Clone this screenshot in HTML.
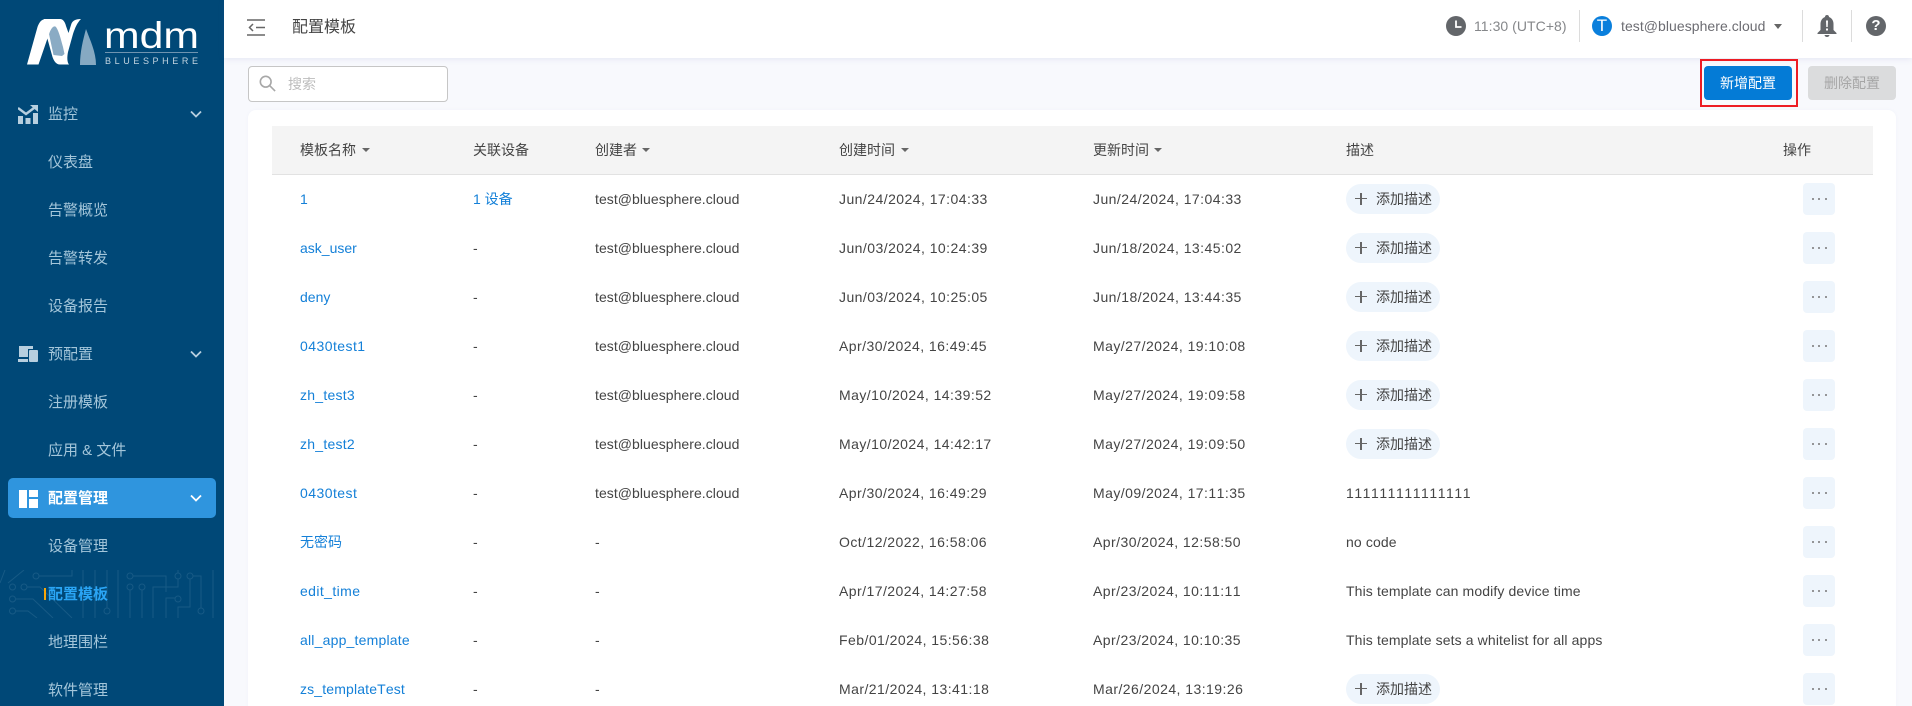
<!DOCTYPE html>
<html lang="zh"><head><meta charset="utf-8"><title>配置模板</title>
<style>
*{box-sizing:border-box;margin:0;padding:0}
html,body{width:1912px;height:706px;overflow:hidden;background:#f8f9fd}
body{position:relative;font-family:"Liberation Sans","Noto Sans CJK SC",sans-serif;font-size:14px;color:#444}
.abs{position:absolute}
#side{position:absolute;left:0;top:0;width:224px;height:706px;background:#004877;overflow:hidden}
.m{position:absolute;left:48px;font-size:15px;line-height:24px;height:24px;color:#a4c6da;white-space:nowrap}
.act{position:absolute;left:8px;top:478px;width:208px;height:40px;background:#2f95de;border-radius:5px}
.chev{position:absolute;left:190px;width:12px;height:8px}
#top{position:absolute;left:224px;top:0;width:1688px;height:58px;background:#fff;box-shadow:0 1px 6px rgba(90,100,170,.13)}
.dv{position:absolute;top:10px;width:1px;height:32px;background:#dcdcdc}
.btn{position:absolute;top:66px;width:88px;height:34px;border-radius:4px;text-align:center;line-height:34px}
#card2{position:absolute;left:248px;top:110px;width:1648px;height:620px;background:#fff;border-radius:8px;box-shadow:0 0 3px rgba(120,130,180,.06)}
#th{position:absolute;left:272px;top:126px;width:1601px;height:49px;background:#f4f4f4;border-bottom:1px solid #e2e2e2}
.h{position:absolute;top:126px;line-height:48px;height:48px;color:#444;white-space:nowrap}
.car{position:absolute;top:148px;width:0;height:0;border-left:4px solid transparent;border-right:4px solid transparent;border-top:4px solid #666}
.c{position:absolute;line-height:50px;height:50px;white-space:nowrap;color:#444;font-kerning:none}
.a{left:300px;color:#1480d8}
.b{left:473px}
.d{left:595px;letter-spacing:.05px}
.e{left:839px;letter-spacing:.45px}
.f{left:1093px;letter-spacing:.45px}
.g{left:1346px;letter-spacing:.12px}
.p{position:absolute;left:1346px;width:94px;height:30px;border-radius:15px;background:#eef5fc;line-height:30px;padding-left:30px;color:#444;white-space:nowrap}
.p:before{content:"";position:absolute;left:9px;top:14px;width:12px;height:1.4px;background:#666}
.p:after{content:"";position:absolute;left:14.3px;top:9px;width:1.4px;height:12px;background:#666}
.o{position:absolute;left:1803px;width:32px;height:32px;border-radius:4px;background:#eef5fc}
.o i{position:absolute;top:15px;width:2px;height:2px;background:#777;border-radius:50%}
.o i:nth-child(1){left:8.5px}.o i:nth-child(2){left:15px}.o i:nth-child(3){left:21.5px}
</style></head><body>

<div id="side">
<svg class="abs" style="left:0;top:0" width="224" height="80" viewBox="0 0 224 80">
<path d="M44 19 H60 C63 19 65 22 66 26 L68.5 33 L71 25 C72 21 75 19 81 19 C77 23 75 28 73 34 L68 52 C67 57 67 62 69 64.5 H60 C56 64.5 54 61 52.5 57 L45 30 Z" fill="#fff"/>
<path d="M49 34 C51 28 54 25 56 27 C59 31 61 40 63 47 L64.5 54 L62 56 L53.5 55 Z" fill="#8aabc4"/>
<path d="M27 64.5 H38.5 L49 34 C51 28 53 25 58 21 L60 19 H46 C41 19 39 23 37.5 27 Z" fill="#fff"/>
<path d="M80 65 C80 52 83 40 86 29 C90 40 96 52 96 65 Z" fill="#86a9c2"/>
<text x="104" y="48" font-family="Liberation Sans" font-size="37" fill="#fff" textLength="95" lengthAdjust="spacingAndGlyphs">mdm</text>
<rect x="105" y="52" width="93" height="1" fill="#6f94b0"/>
<text x="105" y="64" font-family="Liberation Sans" font-size="9" fill="#c2d4e0" textLength="93">BLUESPHERE</text>
</svg>

<svg class="abs" style="left:0;top:570px" width="224" height="48" viewBox="0 0 224 48" fill="none" stroke="#175a85" stroke-width="1">
<path d="M0 13 L5 0 M24 0 L8 13"/>
<circle cx="12.5" cy="17" r="3"/><circle cx="24" cy="17" r="3"/><circle cx="12.5" cy="29" r="3"/><circle cx="12.5" cy="41" r="3"/>
<path d="M27 17 H40 L72 48 M16 29 H33 L53 48 M16 41 H28 L37 48"/>
<circle cx="36" cy="6" r="3"/><path d="M39 6 H72 V0"/>
<path d="M83 0 V48 M95 0 V48"/><circle cx="107" cy="41" r="3"/><path d="M107 38 V0 M118 0 V48"/>
<circle cx="130" cy="6" r="3"/><path d="M133 6 H166 V22"/>
<circle cx="130" cy="17" r="3"/><path d="M130 20 V48"/><circle cx="142" cy="17" r="3"/><path d="M142 20 V48"/>
<path d="M166 48 V28 H175"/><circle cx="178" cy="29" r="3"/>
<circle cx="178" cy="6" r="3"/><circle cx="190" cy="6" r="3"/>
<path d="M178 0 V3 M178 9 V17 H153 V48 M190 9 V37 H178 V48"/>
<path d="M193 6 H201 V38"/><circle cx="201" cy="41" r="3"/><path d="M213 0 V48"/>
</svg>

<svg class="abs" style="left:18px;top:105px" width="20" height="19" viewBox="0 0 20 19" fill="#b7cfdf">
<rect x="0" y="11" width="5" height="8"/><rect x="7.5" y="13" width="5" height="6"/><rect x="15" y="8" width="5" height="11"/>
<path d="M0 3 L8 9 L16 3" fill="none" stroke="#b7cfdf" stroke-width="2.4"/><path d="M12 0 H20 V7 Z"/></svg>
<div class="m" style="top:103px">监控</div>
<svg class="chev" style="top:110px" viewBox="0 0 12 8"><path d="M1 1.5 L6 6.5 L11 1.5" fill="none" stroke="#b7cfdf" stroke-width="1.8"/></svg>
<div class="m" style="top:151px">仪表盘</div>
<div class="m" style="top:199px">告警概览</div>
<div class="m" style="top:247px">告警转发</div>
<div class="m" style="top:295px">设备报告</div>

<svg class="abs" style="left:18px;top:346px" width="20" height="16" viewBox="0 0 20 16" fill="#b7cfdf">
<path d="M1 0 H15 V3 H10 V11 H1 Z"/><rect x="0" y="13" width="10" height="3"/><rect x="11" y="4" width="9" height="12" rx="1"/></svg>
<div class="m" style="top:343px">预配置</div>
<svg class="chev" style="top:350px" viewBox="0 0 12 8"><path d="M1 1.5 L6 6.5 L11 1.5" fill="none" stroke="#b7cfdf" stroke-width="1.8"/></svg>
<div class="m" style="top:391px">注册模板</div>
<div class="m" style="top:439px">应用 &amp; 文件</div>

<div class="act"></div>
<svg class="abs" style="left:19px;top:490px" width="19" height="18" viewBox="0 0 19 18" fill="#fff"><rect width="8" height="18"/><rect x="10" width="9" height="7"/><rect x="10" y="9" width="9" height="9"/></svg>
<div class="m" style="top:487px;color:#fff;font-weight:bold">配置管理</div>
<svg class="chev" style="top:494px" viewBox="0 0 12 8"><path d="M1 1.5 L6 6.5 L11 1.5" fill="none" stroke="#fff" stroke-width="1.8"/></svg>
<div class="m" style="top:535px">设备管理</div>
<div class="abs" style="left:44px;top:588px;width:2px;height:12px;background:#f6a609"></div>
<div class="m" style="top:583px;color:#2aa5f5;font-weight:bold">配置模板</div>
<div class="m" style="top:631px">地理围栏</div>
<div class="m" style="top:679px">软件管理</div>
</div>

<div id="card2"></div>

<div id="top"></div>
<svg class="abs" style="left:247px;top:19px" width="18" height="17" viewBox="0 0 18 17" fill="none" stroke="#666" stroke-width="1.5">
<path d="M0 1 H18 M0 16 H18 M9 8.5 H18 M6 5 L2.5 8.5 L6 12"/></svg>
<div class="abs" style="left:292px;top:16px;font-size:16px;line-height:24px;color:#444">配置模板</div>

<svg class="abs" style="left:1446px;top:16px" width="20" height="20" viewBox="0 0 20 20"><circle cx="10" cy="10" r="10" fill="#63666a"/><path d="M10 4.5 V11 H15.5" fill="none" stroke="#fff" stroke-width="1.8"/></svg>
<div class="abs" style="left:1474px;top:16px;line-height:21px;color:#85878a;white-space:nowrap;letter-spacing:.05px">11:30 (UTC+8)</div>
<div class="dv" style="left:1579px"></div>
<div class="abs" style="left:1592px;top:16px;width:20px;height:20px;border-radius:50%;background:#0a7fdc;color:#fff;text-align:center;line-height:20px;font-size:17px">T</div>
<div class="abs" style="left:1621px;top:16px;line-height:21px;color:#6c6c72;white-space:nowrap;letter-spacing:.05px">test@bluesphere.cloud</div>
<div class="abs" style="left:1774px;top:24px;width:0;height:0;border-left:4.5px solid transparent;border-right:4.5px solid transparent;border-top:5px solid #666"></div>
<div class="dv" style="left:1802px"></div>
<svg class="abs" style="left:1817px;top:15px" width="20" height="22" viewBox="0 0 20 22"><path d="M10 0 C11.2 0 12 .8 12 2 C15 3 16.5 6 16.5 9 V15 L19.5 18 V19 H.5 V18 L3.5 15 V9 C3.5 6 5 3 8 2 C8 .8 8.8 0 10 0Z" fill="#63666a"/><path d="M7.5 20 H12.5 C12.3 21.3 11.2 22 10 22 C8.8 22 7.7 21.3 7.5 20Z" fill="#63666a"/><path d="M9 5.5 H11 L10.7 12 H9.3Z M9 13.5 H11 V15.5 H9Z" fill="#fff"/></svg>
<div class="dv" style="left:1851px"></div>
<div class="abs" style="left:1866px;top:16px;width:20px;height:20px;border-radius:50%;background:#63666a;color:#fff;text-align:center;line-height:20px;font-size:15px;font-weight:bold">?</div>

<div class="abs" style="left:248px;top:66px;width:200px;height:36px;border:1px solid #c6c6c6;border-radius:4px;background:#fff"></div>
<svg class="abs" style="left:259px;top:75px" width="17" height="17" viewBox="0 0 19 19" fill="none" stroke="#a8a8a8" stroke-width="1.8"><circle cx="7.5" cy="7.5" r="6"/><path d="M12 12 L18 18"/></svg>
<div class="abs" style="left:288px;top:73px;line-height:22px;color:#bdbdbd">搜索</div>

<div class="btn" style="left:1704px;background:#047bd6;color:#fff">新增配置</div>
<div class="abs" style="left:1700px;top:59px;width:98px;height:48px;border:2px solid #ed1c24"></div>
<div class="btn" style="left:1808px;background:#dbdcdd;color:#a6a6a6">删除配置</div>

<div id="th"></div>
<div class="h" style="left:300px">模板名称</div><div class="car" style="left:362px"></div>
<div class="h" style="left:473px">关联设备</div>
<div class="h" style="left:595px">创建者</div><div class="car" style="left:642px"></div>
<div class="h" style="left:839px">创建时间</div><div class="car" style="left:901px"></div>
<div class="h" style="left:1093px">更新时间</div><div class="car" style="left:1154px"></div>
<div class="h" style="left:1346px">描述</div>
<div class="h" style="left:1783px">操作</div>

<div class="c a" style="top:174px">1</div><div class="c b" style="top:174px;color:#1480d8">1 设备</div><div class="c d" style="top:174px">test@bluesphere.cloud</div><div class="c e" style="top:174px">Jun/24/2024, 17:04:33</div><div class="c f" style="top:174px">Jun/24/2024, 17:04:33</div><div class="p" style="top:184px">添加描述</div><div class="o" style="top:183px"><i></i><i></i><i></i></div>
<div class="c a" style="top:223px">ask_user</div><div class="c b" style="top:223px">-</div><div class="c d" style="top:223px">test@bluesphere.cloud</div><div class="c e" style="top:223px">Jun/03/2024, 10:24:39</div><div class="c f" style="top:223px">Jun/18/2024, 13:45:02</div><div class="p" style="top:233px">添加描述</div><div class="o" style="top:232px"><i></i><i></i><i></i></div>
<div class="c a" style="top:272px">deny</div><div class="c b" style="top:272px">-</div><div class="c d" style="top:272px">test@bluesphere.cloud</div><div class="c e" style="top:272px">Jun/03/2024, 10:25:05</div><div class="c f" style="top:272px">Jun/18/2024, 13:44:35</div><div class="p" style="top:282px">添加描述</div><div class="o" style="top:281px"><i></i><i></i><i></i></div>
<div class="c a" style="top:321px;letter-spacing:.45px">0430test1</div><div class="c b" style="top:321px">-</div><div class="c d" style="top:321px">test@bluesphere.cloud</div><div class="c e" style="top:321px">Apr/30/2024, 16:49:45</div><div class="c f" style="top:321px">May/27/2024, 19:10:08</div><div class="p" style="top:331px">添加描述</div><div class="o" style="top:330px"><i></i><i></i><i></i></div>
<div class="c a" style="top:370px;letter-spacing:.25px">zh_test3</div><div class="c b" style="top:370px">-</div><div class="c d" style="top:370px">test@bluesphere.cloud</div><div class="c e" style="top:370px">May/10/2024, 14:39:52</div><div class="c f" style="top:370px">May/27/2024, 19:09:58</div><div class="p" style="top:380px">添加描述</div><div class="o" style="top:379px"><i></i><i></i><i></i></div>
<div class="c a" style="top:419px;letter-spacing:.25px">zh_test2</div><div class="c b" style="top:419px">-</div><div class="c d" style="top:419px">test@bluesphere.cloud</div><div class="c e" style="top:419px">May/10/2024, 14:42:17</div><div class="c f" style="top:419px">May/27/2024, 19:09:50</div><div class="p" style="top:429px">添加描述</div><div class="o" style="top:428px"><i></i><i></i><i></i></div>
<div class="c a" style="top:468px;letter-spacing:.45px">0430test</div><div class="c b" style="top:468px">-</div><div class="c d" style="top:468px">test@bluesphere.cloud</div><div class="c e" style="top:468px">Apr/30/2024, 16:49:29</div><div class="c f" style="top:468px">May/09/2024, 17:11:35</div><div class="c g" style="top:468px;letter-spacing:.55px">111111111111111</div><div class="o" style="top:477px"><i></i><i></i><i></i></div>
<div class="c a" style="top:517px">无密码</div><div class="c b" style="top:517px">-</div><div class="c d" style="top:517px">-</div><div class="c e" style="top:517px">Oct/12/2022, 16:58:06</div><div class="c f" style="top:517px">Apr/30/2024, 12:58:50</div><div class="c g" style="top:517px">no code</div><div class="o" style="top:526px"><i></i><i></i><i></i></div>
<div class="c a" style="top:566px;letter-spacing:.4px">edit_time</div><div class="c b" style="top:566px">-</div><div class="c d" style="top:566px">-</div><div class="c e" style="top:566px">Apr/17/2024, 14:27:58</div><div class="c f" style="top:566px">Apr/23/2024, 10:11:11</div><div class="c g" style="top:566px">This template can modify device time</div><div class="o" style="top:575px"><i></i><i></i><i></i></div>
<div class="c a" style="top:615px;letter-spacing:.2px">all_app_template</div><div class="c b" style="top:615px">-</div><div class="c d" style="top:615px">-</div><div class="c e" style="top:615px">Feb/01/2024, 15:56:38</div><div class="c f" style="top:615px">Apr/23/2024, 10:10:35</div><div class="c g" style="top:615px">This template sets a whitelist for all apps</div><div class="o" style="top:624px"><i></i><i></i><i></i></div>
<div class="c a" style="top:664px;letter-spacing:.15px">zs_templateTest</div><div class="c b" style="top:664px">-</div><div class="c d" style="top:664px">-</div><div class="c e" style="top:664px">Mar/21/2024, 13:41:18</div><div class="c f" style="top:664px">Mar/26/2024, 13:19:26</div><div class="p" style="top:674px">添加描述</div><div class="o" style="top:673px"><i></i><i></i><i></i></div>
</body></html>
